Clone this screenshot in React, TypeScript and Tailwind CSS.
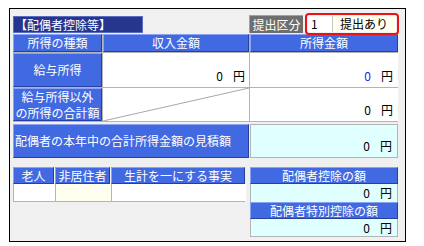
import React from "react";

const font = { fontFamily: '"Noto Sans CJK JP", "Noto Sans", sans-serif' };

function Hdr({ children, className = "" }: { children: React.ReactNode; className?: string }) {
  return (
    <div
      className={
        "flex items-center justify-center bg-[#4169e1] text-white text-[12px] leading-none border-t border-l border-t-[#8aa2f0] border-l-[#8aa2f0] border-b border-r border-b-[#27409f] border-r-[#27409f] " +
        className
      }
    >
      {children}
    </div>
  );
}

function Yen({ blue = false }: { blue?: boolean }) {
  return (
    <span className="text-[12px] leading-none text-black">
      <span className={blue ? "text-[#1a1aff]" : ""}>0</span>
      <span className="ml-[10px]">円</span>
    </span>
  );
}

export default function App() {
  return (
    <div className="w-[424px] h-[246px] bg-white pt-[8px] pl-[9px]" style={font}>
      <div className="w-[397px] h-[234px] border border-black bg-[#f0f0f0] pl-[3px] pt-[4px] flex flex-col">
        {/* top row */}
        <div className="h-[21px] flex items-start relative">
          <div className="mt-[3px] w-[130px] h-[17px] bg-[#26368f] border border-[#5a6cc0] text-white text-[12px] leading-none flex items-center pl-[1px]">
            【配偶者控除等】
          </div>
          <div className="ml-[106px] mt-[2px] w-[54px] h-[18px] bg-[#6e6e6e] border-t border-l border-[#a0a0a0] text-white text-[12px] leading-none flex items-center justify-center">
            提出区分
          </div>
          <div className="ml-[2px] w-[94px] h-[22px] border-[2px] border-[#ee1111] rounded-[4px] flex p-[1px]">
            <div className="w-[24px] bg-white text-[12px] leading-none flex items-center pl-[3px] text-black">1</div>
            <div className="flex-1 bg-[#fffff0] border-l border-[#c8c8c8] text-[12px] leading-none flex items-center pl-[7px] text-black">
              提出あり
            </div>
          </div>
        </div>

        {/* main table */}
        <div className="w-[385px] grid grid-cols-[89px_146px_148px] grid-rows-[18px_34px_33px] gap-[1px] bg-[#b4b4b4] border-r border-b border-[#b4b4b4]">
          <Hdr>所得の種類</Hdr>
          <Hdr>収入金額</Hdr>
          <Hdr>所得金額</Hdr>

          <Hdr className="text-[12px]">給与所得</Hdr>
          <div className="bg-white flex items-end justify-end pr-[4px] pb-[5px]">
            <Yen />
          </div>
          <div className="bg-white flex items-end justify-end pr-[5px] pb-[5px]">
            <Yen blue />
          </div>

          <Hdr className="flex-col !leading-[16px]">
            <span className="leading-[16px]">給与所得以外</span>
            <span className="leading-[16px]">の所得の合計額</span>
          </Hdr>
          <div className="bg-white relative">
            <svg className="absolute inset-0" width="146" height="33" viewBox="0 0 146 33">
              <line x1="0" y1="33" x2="146" y2="0" stroke="#a8a8a8" strokeWidth="1" />
            </svg>
          </div>
          <div className="bg-white flex items-end justify-end pr-[5px] pb-[5px]">
            <Yen />
          </div>
        </div>

        {/* estimated row */}
        <div className="mt-[2px] w-[385px] h-[34px] flex gap-[1px]">
          <div className="w-[236px] bg-[#4169e1] border-t border-l border-t-[#8aa2f0] border-l-[#8aa2f0] border-b border-r border-b-[#27409f] border-r-[#27409f] text-white text-[12px] leading-none flex items-center pl-[1px]">
            配偶者の本年中の合計所得金額の見積額
          </div>
          <div className="w-[148px] bg-[#e0ffff] border border-[#b4b4b4] flex items-end justify-end pr-[5px] pb-[5px]">
            <Yen />
          </div>
        </div>

        {/* bottom tables */}
        <div className="mt-[9px] flex">
          <div className="w-[232px]">
            <div className="grid grid-cols-[41px_55px_134px] gap-[1px] h-[17px]">
              <Hdr>老人</Hdr>
              <Hdr>非居住者</Hdr>
              <Hdr>生計を一にする事実</Hdr>
            </div>
            <div className="grid grid-cols-[42px_56px_134px] h-[18px] border border-t-0 border-[#b4b4b4]">
              <div className="bg-white border-r border-[#b4b4b4]" />
              <div className="bg-[#fffff0] border-r border-[#b4b4b4]" />
              <div className="bg-white" />
            </div>
          </div>
          <div className="ml-[5px] w-[148px] flex flex-col">
            <Hdr className="h-[17px]">配偶者控除の額</Hdr>
            <div className="h-[18px] bg-[#e0ffff] border-l border-r border-[#b4b4b4] flex items-center justify-end pr-[5px]">
              <Yen />
            </div>
            <Hdr className="h-[17px]">配偶者特別控除の額</Hdr>
            <div className="h-[18px] bg-[#e0ffff] border border-t-0 border-[#b4b4b4] flex items-center justify-end pr-[5px]">
              <Yen />
            </div>
          </div>
        </div>
      </div>
    </div>
  );
}
